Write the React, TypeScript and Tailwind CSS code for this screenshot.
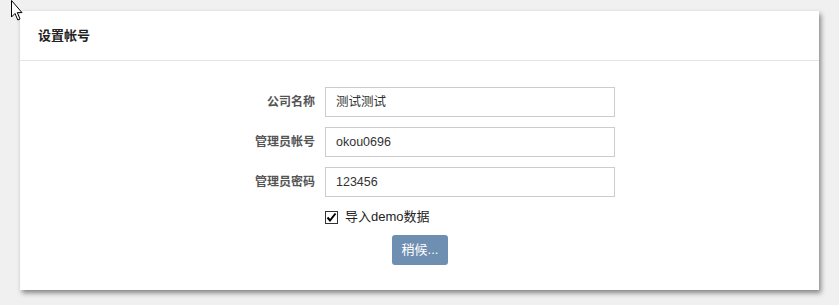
const rows = [
  { label: "公司名称", value: "测试测试" },
  { label: "管理员帐号", value: "okou0696" },
  { label: "管理员密码", value: "123456" },
];

const font = "font-['Liberation_Sans','Noto_Sans_CJK_SC',sans-serif]";

function Cursor() {
  return (
    <svg
      className="absolute left-[10px] top-0"
      width="14"
      height="22"
      viewBox="0 0 14 22"
      aria-hidden
    >
      <path
        d="M1.5 0.5 L1.5 17 L5 13.5 L7.8 20 L10 19 L7.3 12.6 L12 12.6 Z"
        fill="#fff"
        stroke="#000"
        strokeWidth="1"
        strokeLinejoin="miter"
      />
    </svg>
  );
}

export default function App() {
  return (
    <div className={`relative h-[305px] w-[839px] bg-[#f0f0f0] pt-[11px] pl-[20px] ${font}`}>
      <div className="w-[799px] h-[279px] bg-white shadow-[2px_3px_5px_rgba(0,0,0,0.45)]">
        <div className="h-[50px] flex items-center pl-[18px] border-b border-[#e5e5e5]">
          <h3 className="text-[13px] font-bold text-[#222]">设置帐号</h3>
        </div>
        <div className="pt-[26px] flex flex-col">
          {rows.map((r) => (
            <div key={r.label} className="flex items-center mb-[10px] ml-[175px]">
              <label className="w-[120px] text-right text-[12px] font-bold text-[#555]">
                {r.label}
              </label>
              <div className="ml-[10px] w-[290px] h-[30px] border border-[#cccccc] flex items-center px-[10px] text-[12.5px] text-[#333]">
                {r.value}
              </div>
            </div>
          ))}
          <label className="ml-[305px] mt-[1px] h-[18px] flex items-center gap-[7px] text-[13px] text-[#222]">
            <span className="w-[13px] h-[13px] border border-[#333] flex items-center justify-center bg-white">
              <svg width="11" height="11" viewBox="0 0 11 11" aria-hidden>
                <path d="M1.5 5.5 L4 8.5 L9.5 1.5" fill="none" stroke="#000" strokeWidth="2" />
              </svg>
            </span>
            导入demo数据
          </label>
          <div className="ml-[372px] mt-[9px]">
            <button className="w-[56px] h-[30px] rounded-[3px] bg-[#6f8fb2] text-white text-[13px]">
              稍候...
            </button>
          </div>
        </div>
      </div>
      <Cursor />
    </div>
  );
}
